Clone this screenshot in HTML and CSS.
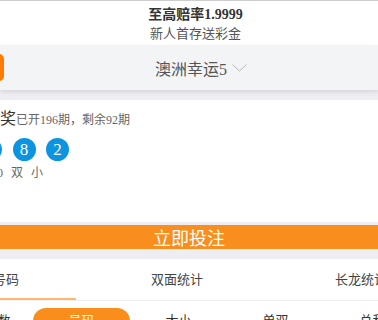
FILE: index.html
```html
<!DOCTYPE html>
<html lang="zh-CN">
<head>
    <meta charset="UTF-8">
    <meta name="viewport" content="width=device-width, initial-scale=1.0">
    <title>澳洲幸运5</title>
    <link rel="stylesheet" href="styles.css">
</head>
<body>
    <header class="promo">
        <div class="promo-title">至高赔率1.9999</div>
        <div class="promo-sub">新人首存送彩金</div>
    </header>

    <div class="lottery-bar">
        <span class="bar-btn"></span>
        <div class="bar-title">
            澳洲幸运5
            <svg class="chevron" viewBox="0 0 15 8" fill="none" stroke="currentColor" stroke-width="1">
                <polyline points="0.5 0.5 7.5 7 14.5 0.5"/>
            </svg>
        </div>
    </div>

    <section class="draw-card">
        <div class="draw-inner">
            <div class="draw-head">
                <span class="draw-name">第21658期开奖</span>
                <span class="draw-meta">已开196期，剩余92期</span>
            </div>
            <div class="balls">
                <span class="ball">3</span>
                <span class="ball">1</span>
                <span class="ball">6</span>
                <span class="ball">8</span>
                <span class="ball">2</span>
            </div>
            <div class="draw-attrs">
                <span>总和</span>
                <span>20</span>
                <span>双</span>
                <span>小</span>
            </div>
        </div>
    </section>

    <div class="bet-wrap">
        <button class="bet-button">立即投注</button>
    </div>

    <nav class="stat-tabs">
        <div class="stat-tab active">开奖号码</div>
        <div class="stat-tab">双面统计</div>
        <div class="stat-tab">长龙统计</div>
    </nav>

    <div class="sub-tabs">
        <div class="sub-tab">出现次数</div>
        <div class="sub-tab active">号码</div>
        <div class="sub-tab">大小</div>
        <div class="sub-tab">单双</div>
        <div class="sub-tab">总和</div>
    </div>
</body>
</html>
```

FILE: styles.css
```css
* {
    margin: 0;
    padding: 0;
    box-sizing: border-box;
}

body {
    font-family: "Liberation Serif", "Noto Sans CJK SC", serif;
    background: #eeeef2;
    color: #333;
    width: 378px;
    overflow: hidden;
}

/* promo header */
.promo {
    background: #fff;
    border-top: 1px solid #cdcdcd;
    padding: 4px 0 2px 13px;
    text-align: center;
    height: 45px;
}

.promo-title {
    font-size: 14px;
    font-weight: 700;
    line-height: 19px;
    color: #333;
}

.promo-sub {
    font-size: 13px;
    line-height: 19px;
    color: #555;
}

/* lottery selector */
.lottery-bar {
    display: flex;
    align-items: center;
    height: 45px;
    background: #f3f4f6;
    box-shadow: 0 2px 4px rgba(0, 0, 0, 0.1);
    position: relative;
}

.bar-btn {
    width: 40px;
    height: 27px;
    margin-left: -36px;
    border-radius: 5px;
    background: #ff7b06;
}

.bar-title {
    flex: 1;
    display: flex;
    align-items: center;
    justify-content: center;
    padding-left: 20px;
    font-size: 16px;
    color: #555;
}

.chevron {
    width: 15px;
    height: 8px;
    margin-left: 5px;
    color: #b8b8b8;
}

/* latest draw */
.draw-card {
    background: #fff;
    margin-top: 10px;
    height: 122px;
    padding-top: 9px;
}

.draw-inner {
    margin-left: -88px;
}

.draw-head {
    display: flex;
    align-items: baseline;
    line-height: 20px;
}

.draw-name {
    font-size: 16px;
    color: #333;
}

.draw-meta {
    font-size: 12px;
    color: #666;
}

.balls {
    display: flex;
    gap: 10.5px;
    margin-top: 8px;
}

.ball {
    width: 23px;
    height: 23px;
    border-radius: 50%;
    background: #0d94e0;
    color: #fff;
    font-size: 17px;
    line-height: 23px;
    text-align: center;
}

.draw-attrs {
    display: flex;
    gap: 8px;
    margin-top: 4px;
    padding-left: 47px;
    font-size: 12px;
    line-height: 16px;
    color: #666;
}

/* bet button */
.bet-wrap {
    padding: 3px 0 10px;
}

.bet-button {
    display: block;
    width: 100%;
    height: 24px;
    border: none;
    background: #f98e1d;
    color: #fff;
    font-family: "Noto Sans CJK SC", sans-serif;
    font-size: 18px;
    line-height: 24px;
}

/* statistics tabs */
.stat-tabs {
    display: grid;
    grid-template-columns: repeat(3, 184px);
    margin-left: -99px;
    background: #fff;
    border-bottom: 1px solid #eee;
}

.stat-tab {
    height: 41px;
    padding-top: 11px;
    text-align: center;
    font-size: 13px;
    line-height: 20px;
    color: #444;
    position: relative;
}

.stat-tab.active::after {
    content: "";
    position: absolute;
    left: 9px;
    right: 9px;
    bottom: 0;
    height: 2px;
    background: #fbb86e;
}

.sub-tabs {
    display: flex;
    margin-left: -64px;
    padding-top: 7px;
    background: #fff;
    height: 40px;
}

.sub-tab {
    flex: 0 0 97px;
    height: 26px;
    border-radius: 13px;
    text-align: center;
    font-size: 13px;
    line-height: 26px;
    color: #333;
}

.sub-tab.active {
    background: #f98e1d;
    color: #fff;
}
```
